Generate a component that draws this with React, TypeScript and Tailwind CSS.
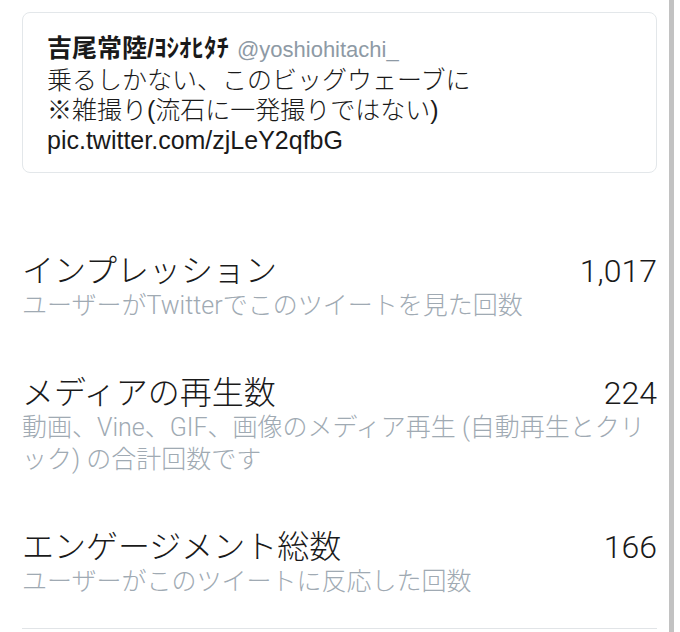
import React from 'react';

const font = "font-['Liberation_Sans','Noto_Sans_CJK_JP',sans-serif]";
const lightFont = "font-['Roboto','Noto_Sans_CJK_JP',sans-serif]";

interface StatRowProps {
  title: string;
  value: string;
  children: React.ReactNode;
}

const StatRow: React.FC<StatRowProps> = ({ title, value, children }) => (
  <div className={`font-light ${lightFont}`}>
    <div className="flex items-baseline justify-between text-[32px] leading-[38px] text-[#1a1a1a]">
      <span>{title}</span>
      <span>{value}</span>
    </div>
    <div className="text-[25px] leading-[32px] text-[#a0aab3]">{children}</div>
  </div>
);

export default function App() {
  return (
    <div className={`flex h-[632px] w-[680px] overflow-hidden bg-white ${font}`}>
      <div className="w-[669px] pl-[22px] pr-[12px] pt-[12px]">
        {/* Tweet card */}
        <div className="rounded-[8px] border border-[#e3e7ea] px-[24px] pt-[20px] pb-[17px] text-[25px] leading-[30px] text-[#1a1a1a]">
          <div className="flex items-baseline gap-[8px]">
            <span className="font-bold">吉尾常陸/ﾖｼｵﾋﾀﾁ</span>
            <span className="text-[22px] text-[#8e9aa5]">@yoshiohitachi_</span>
          </div>
          <div className="font-light">乗るしかない、このビッグウェーブに</div>
          <div className="font-light">※雑撮り(流石に一発撮りではない)</div>
          <div>pic.twitter.com/zjLeY2qfbG</div>
        </div>

        {/* Stats */}
        <div className="mt-[79px] flex flex-col gap-[52px]">
          <StatRow title="インプレッション" value="1,017">
            ユーザーがTwitterでこのツイートを見た回数
          </StatRow>
          <StatRow title="メディアの再生数" value="224">
            動画、Vine、GIF、画像のメディア再生 (自動再生とクリ
            <br />
            ック) の合計回数です
          </StatRow>
          <StatRow title="エンゲージメント総数" value="166">
            ユーザーがこのツイートに反応した回数
          </StatRow>
        </div>
        <div className="mt-[30px] h-px bg-[#e1e4e7]" />
      </div>

      {/* Scroll indicator */}
      <div className="w-[5px] bg-[#c2c2c2]" />
      <div className="w-[6px]" />
    </div>
  );
}
